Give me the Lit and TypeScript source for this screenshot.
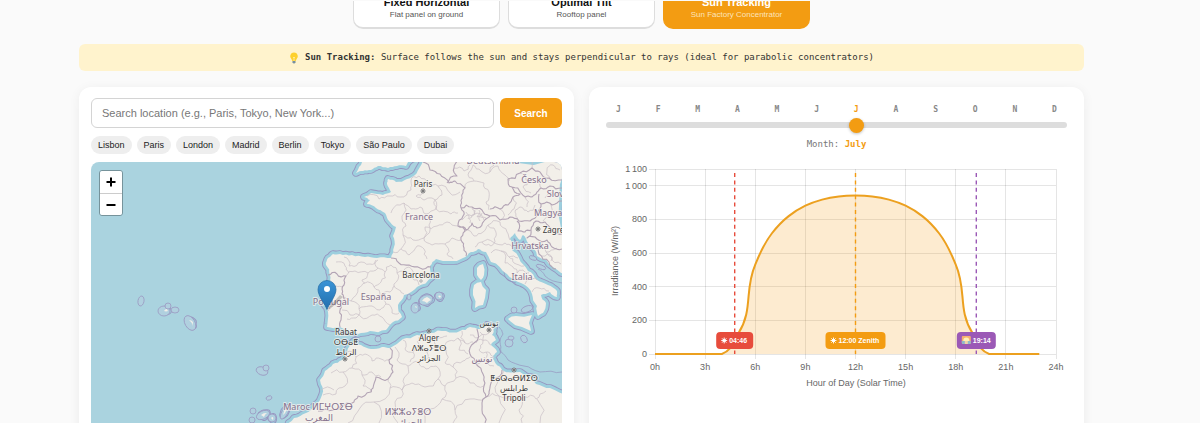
import { LitElement, html, svg, css } from "lit";
import { customElement, property, state } from "lit/decorators.js";

type Pt = [number, number];

const SANS = css`"Liberation Sans", Arial, sans-serif`;
const MONO = css`"DejaVu Sans Mono", monospace`;

/* ---------- map geometry ---------- */

const parse = (s: string): Pt[] =>
  s.trim().split(/\s+/).map((p) => p.split(",").map(Number) as Pt);

/** Subdivides a polyline and displaces the midpoints so that it reads as a natural boundary. */
function rough(s: string, amp = 0.16, depth = 2, seed = 7): string {
  let r = seed;
  const rnd = () => {
    r = (r * 16807) % 2147483647;
    return r / 2147483647 - 0.5;
  };
  let pts = parse(s);
  for (let d = 0; d < depth; d++) {
    const out: Pt[] = [pts[0]];
    for (let i = 1; i < pts.length; i++) {
      const [x0, y0] = pts[i - 1];
      const [x1, y1] = pts[i];
      const k = rnd() * 2 * amp;
      out.push([(x0 + x1) / 2 - (y1 - y0) * k, (y0 + y1) / 2 + (x1 - x0) * k], [x1, y1]);
    }
    pts = out;
  }
  return "M" + pts.map(([x, y]) => `${x.toFixed(1)} ${y.toFixed(1)}`).join("L");
}

const LAND = [
  // Europe
  "423,155 420,167 415,175 407,179 396,182 388,179 387,184 391,192 383,195 371,193 364,197 370,200 367,204 376,208 385,213 389,221 396,227 393,236 394,247 391,258 377,258 365,257 352,255 340,254 333,254 328,258 326,265 330,275 329,285 326,293 324,304 328,312 327,327 340,327 348,331 358,334 370,331 386,330 393,322 402,317 398,305 404,295 417,287 432,277 430,266 436,259 450,261 463,258 471,252 478,249 486,252 491,262 507,274 521,283 532,294 537,306 538,316 543,313 546,303 541,295 550,292 557,297 557,291 548,285 537,280 528,271 519,258 512,250 510,239 515,233 520,240 523,235 528,243 537,256 553,267 570,276 570,155",
  // Great Britain
  "361,155 361,165 356,173 363,171 371,170 378,166 388,168 397,166 406,166 418,155",
  // Africa
  "286,430 294,418 306,413 315,405 322,395 320,380 325,371 333,364 342,360 347,352 354,341 361,345 371,349 382,347 390,348 403,339 417,335 430,333 446,331 460,331 470,327 480,329 487,325 494,328 492,335 496,340 491,345 497,352 492,357 496,364 502,370 520,372 531,377 536,384 550,388 570,397 570,430",
  "508,319 516,316 532,315 529,323 531,331 522,327 510,321",
  "474,285 481,282 486,290 483,305 475,308 473,295",
  "477,268 483,264 484,275 481,280 477,275",
  "422,301 427,297 431,300 427,303",
  "415,307 416,306 417,308",
  "438,296 441,296 440,298",
  "164,311 167,309 168,311",
  "189,320 193,322 193,326",
  "261,415 267,413 264,417",
  "271,418 273,417 273,420",
  "283,415 287,408 286,411",
].map((s, i) => rough(s + " " + s.trim().split(" ")[0], 0.12, i < 3 ? 2 : 1, 11 + i) + "Z").join("");

const COUNTRIES = [
  // Portugal / Spain
  "328,275 337,274 346,276 344,285 342,294 345,300 340,310 341,320 340,327",
  // Pyrenees
  "391,258 399,263 409,265 420,268 431,267",
  // France north and east
  "423,162 430,170 440,174 449,183 455,181 465,188 462,198 461,208",
  "447,183 457,176 454,168 459,160",
  "461,208 463,216 458,226 465,231 461,240 464,248 466,256",
  // Switzerland
  "461,208 472,207 482,210 490,216 484,221 477,228 472,223 466,230 459,226",
  // Germany, Austria, Czechia
  "490,209 500,209 508,205 513,197 520,194 512,187 508,179 520,173 532,168 540,172 549,178 562,180",
  "512,187 521,193 531,197 536,194 541,188 550,186 562,188",
  "490,216 500,220 510,217 519,221 530,221 537,213 541,204 539,194",
  "517,221 518,231 525,232 531,230 536,221 545,222 554,231 562,234",
  "531,230 527,238 537,239 547,240 552,247 562,249",
  "533,243 539,254 549,262 556,269",
  "541,204 552,205 562,201",
  // North Africa
  "390,348 389,360 393,372 388,379 376,377 373,388 371,392 358,396 354,402 341,405 333,410 318,411",
  "477,329 474,343 470,354 476,364 483,374 484,386 486,397 482,410 485,423",
  "502,370 493,379 489,392 486,397",
];

const REGIONS = [
  "411,181 419,176 427,185 438,186 442,195 435,200 436,209 451,214 458,213",
  "423,191 416,196 424,200 432,198 436,209 426,214 420,207 411,209 404,203 400,205 391,213",
  "367,196 379,199 390,196 400,197 411,190 411,181",
  "404,203 402,216 406,226 403,235 413,240 424,238 425,227 437,226 447,222 458,226",
  "426,214 429,225 424,238 432,245 445,244 452,238 461,240",
  "403,235 401,249 409,255 417,246 424,249 427,259",
  "445,244 447,254 453,259", "401,249 393,252",
  "438,186 450,193 460,192", "423,191 430,184",
  "465,188 474,181 484,183 489,192 486,202 489,210",
  "474,181 469,172 473,165 481,171 490,172 498,166 505,175 509,181",
  "454,168 464,171 470,165 468,158", "490,172 494,165 491,158",
  "520,173 526,180 537,181 541,188", "532,168 536,160", "528,180 523,187 531,193",
  "550,178 547,170 553,165 560,170", "535,205 528,212 521,207 515,212 517,220",
  "551,205 549,215 543,221", "545,198 555,194 562,196", "552,214 562,216",
  "500,209 503,218", "513,197 514,209 508,215", "525,197 527,207",
  "462,220 472,216 474,211", "470,223 472,215 480,214 484,220", "479,210 477,217 486,218",
  "466,212 468,219", "472,208 475,215", "480,221 482,213",
  // Italy
  "465,231 474,236 483,232 488,225 494,228 496,236 491,246 482,242 475,247",
  "488,225 500,222 507,232 510,240", "482,242 493,242 505,243 512,247",
  "491,253 501,251 509,257 518,258", "501,251 505,263 513,267 517,273",
  "509,257 514,263 524,266", "517,273 523,270 529,273", "525,284 531,279 537,280", "532,292 539,288 549,291",
  "535,247 546,252 557,248", "546,252 551,261", "542,256 552,257 561,264", "538,243 545,247",
  // Iberia
  "346,276 355,271 368,273 378,268 385,272 391,265", "336,262 345,266 349,273", "344,257 349,266 358,263 370,264 378,260",
  "378,268 376,260", "385,272 381,282 374,287 365,283 358,288 351,301 344,297",
  "391,265 397,273 409,267", "397,273 394,284 399,290 404,294", "374,287 380,296 390,292 395,286",
  "351,301 359,309 369,306 380,310 386,304 382,296", "359,309 356,318 347,319", "386,304 392,313 399,313",
  "342,310 350,315 361,317 372,315 382,317 390,325", "330,292 336,286 343,288", "328,311 335,305 341,308",
  "368,273 362,280 365,283", "409,267 412,278 419,285",
  // Maghreb
  "347,352 356,357 365,354 372,361 381,359 389,360", "356,357 352,368 343,372 331,373", "352,368 362,375 372,372 381,377",
  "343,372 345,386 336,394 323,395", "362,375 363,386 371,392", "321,390 334,390",
  "395,347 397,360 408,366 419,362 426,369 436,366", "403,340 405,349 413,352 420,346 427,352 436,347 446,351",
  "413,352 410,362", "427,352 425,362", "436,347 437,338 447,336", "446,351 449,341 458,338 465,343 473,342",
  "458,338 459,350 468,354", "446,351 445,363 453,367 463,361 470,357", "420,346 419,337", "465,343 462,331",
  "436,366 438,379 425,387 412,383 402,390 390,388 388,379", "408,366 404,378 402,390", "453,367 456,378 445,386 438,379",
  "456,378 470,383 484,386", "402,390 395,402 398,423", "445,386 442,399 430,409 425,423", "442,399 455,410 470,399 486,397",
  "455,410 453,423", "390,388 374,402 360,408 348,423", "374,402 379,423",
  "476,343 486,340 491,345", "480,332 483,341 479,350 488,352 494,358", "477,364 487,363 494,366",
  "486,352 483,361", "470,335 476,338 489,333", "486,397 499,396 512,400 524,397", "499,396 499,379 504,371",
  "520,398 519,410 522,423", "524,397 536,399 546,391", "537,399 540,423", "499,396 499,423",
].map((s, i) => rough(s, 0.24, 2, 31 + i * 17)).join("");

const COUNTRY_PATH = COUNTRIES.map((s, i) => rough(s, 0.22, 2, 91 + i * 13)).join("");

const MARITIME = [
  "499,327 503,334 500,342 501,352 508,360 524,366 540,372 562,372",
  "497,262 505,277 516,283", "538,269 545,276 562,283", "523,233 529,240 533,248",
].map((s) => rough(s, 0.1, 2)).join("");

const RINGS: [number, number, number, number, number][] = [
  [141, 301, 3, 5, 10], [164, 311, 6, 5, 0], [168, 306, 3, 3, 0], [175, 310, 4, 3, 0],
  [190, 323, 5, 8, -30], [262, 371, 6, 4, 20], [266, 368, 3, 3, 0], [269, 398, 3, 2, -20],
  [253, 411, 3, 3, 0], [252, 420, 3, 3, 0], [263, 415, 7, 4, -25], [272, 418, 4, 4, 0], [285, 412, 3, 8, 30],
  [415, 308, 4, 5, 0], [426, 300, 7, 5, -20], [439, 296, 4, 4, 0], [409, 297, 2, 3, 0],
  [378, 339, 3, 3, 0], [514, 310, 3, 3, 0], [527, 309, 6, 3, -20], [509, 343, 4, 4, 0],
  [524, 339, 3, 4, -30], [511, 338, 3, 2, 0], [533, 258, 4, 2, 20], [541, 267, 5, 2, 20],
];

type Label = [string, number, number, boolean];
const LABELS: Label[] = [
  ["Deutschland", 493, 164, false], ["Česko", 534, 183, false], ["Slovensko", 568, 197, false],
  ["Magyarország", 564, 216, false], ["France", 419, 220, false], ["Hrvatska", 530, 249, false],
  ["Italia", 522, 280, false], ["España", 376, 300, false], ["Portugal", 331, 305, false],
  ["تونس", 482, 362, false], ["Maroc ⵍⵎⵖⵔⵉⴱ", 318, 410, false], ["المغرب", 319, 421, false],
  ["ⵍⵣⵣⴰⵢⴻⵔ", 408, 415, false], ["الجزائر", 409, 426, false],
  ["Paris", 423, 187, true], ["Zagreb", 556, 233, true], ["Barcelona", 421, 278, true],
  ["Rabat", 346, 335, true], ["ⵔⴱⴰⵟ", 346, 345, true], ["الرباط", 346, 355, true],
  ["Alger", 429, 341, true], ["ⴷⵣⴰⵢⴻⵔ", 429, 351, true], ["الجزائر", 429, 361, true],
  ["تونس", 489, 326, true], ["ⵟⴰⵕⴰⴱⵍⵉⵙ", 514, 381, true], ["طرابلس", 514, 391, true], ["Tripoli", 514, 401, true],
];

const CAPITALS: Pt[] = [[423, 191], [538, 229], [345, 359], [429, 331], [489, 330], [514, 370]];

@customElement("location-map")
class LocationMap extends LitElement {
  static styles = css`
    :host { display: block; position: relative; height: 400px; border-radius: 8px; overflow: hidden; background: #aad3df; }
    .map { display: block; width: 100%; height: 100%; }
    .label { font: 9px "Noto Sans", "DejaVu Sans", sans-serif; text-anchor: middle; paint-order: stroke; stroke: #f7f4ef; stroke-width: 2px; stroke-opacity: 0.7; stroke-linejoin: round; fill: #84708c; }
    .city { fill: #3a3a3a; font-size: 8px; }
    .zoom { position: absolute; top: 8px; left: 8px; display: flex; flex-direction: column; border: 1px solid rgba(0, 0, 0, 0.3); border-radius: 3px; background-clip: padding-box; overflow: hidden; }
    .zoom button { width: 22px; height: 22px; padding: 0; border: 0; background: #fff; display: grid; place-items: center; cursor: pointer; }
    .zoom button + button { border-top: 1px solid #ccc; }
  `;
  render() {
    return html`
      <svg class="map" viewBox="91 162 471 400" preserveAspectRatio="xMidYMin slice" role="img" aria-label="Map">
        <defs>
          <linearGradient id="pin" x2="0" y2="1"><stop stop-color="#3b94d6" /><stop offset="1" stop-color="#216fae" /></linearGradient>
        </defs>
        <g fill="none" stroke-linejoin="round">
          <path d=${LAND} stroke="#9795c0" stroke-width="7.6" />
          <path d=${LAND} stroke="#9dcfde" stroke-width="5.8" />
          <g fill="#b0d0df" stroke="#9a98c1" stroke-width="0.8">
            ${RINGS.map(([x, y, rx, ry, a]) => svg`<ellipse cx=${x} cy=${y} rx=${rx} ry=${ry} transform=${`rotate(${a} ${x} ${y})`} />`)}
          </g>
          <path d=${MARITIME} stroke="#9795c0" stroke-width="0.7" />
          <path d=${LAND} fill="#f2efe9" />
          <path d=${REGIONS} stroke="#c9bec6" stroke-width="0.7" />
          <path d=${COUNTRY_PATH} stroke="#b3a4b5" stroke-width="1.1" />
        </g>
        ${CAPITALS.map(([x, y]) => svg`<circle cx=${x} cy=${y} r="2" fill="#eee" stroke="#555" stroke-width="0.7" /><circle cx=${x} cy=${y} r="1" fill="#555" />`)}
        <circle cx="421" cy="281" r="1.2" fill="#fff" stroke="#777" stroke-width="0.6" />
        ${LABELS.map(([t, x, y, city]) => svg`<text class=${city ? "label city" : "label"} x=${x} y=${y}>${t}</text>`)}
        <path d="M327 309L340 295L343 297L330 309Z" fill="#000" opacity="0.18" />
        <path d="M327 309.5C325 304 318 296 318 289.5A9 9 0 0 1 336 289.5C336 296 329 304 327 309.5Z" fill="url(#pin)" stroke="#2068a3" stroke-width="0.7" />
        <circle cx="327" cy="289" r="3" fill="#fff" />
      </svg>
      <div class="zoom">
        <button aria-label="Zoom in"><svg width="10" height="10"><path d="M5 .5v9M.5 5h9" stroke="#000" stroke-width="2" /></svg></button>
        <button aria-label="Zoom out"><svg width="10" height="10"><path d="M.5 5h9" stroke="#000" stroke-width="2" /></svg></button>
      </div>
    `;
  }
}

/* ---------- irradiance chart ---------- */

const HOURLY = [0, 0, 0, 0, 0, 124, 532, 718, 820, 882, 918, 937, 942, 937, 918, 882, 820, 718, 532, 124, 0, 0, 0, 0];
const PLOT = { left: 54, right: 455, top: 19, bottom: 204, max: 1100 };
const px = (h: number) => PLOT.left + ((PLOT.right - PLOT.left) * h) / 24;
const py = (v: number) => PLOT.bottom - ((PLOT.bottom - PLOT.top) * v) / PLOT.max;

function spline(values: number[], tension = 0.4): string {
  const pts: Pt[] = values.map((v, h) => [px(h), py(v)]);
  const clamp = (y: number) => Math.min(PLOT.bottom, Math.max(PLOT.top, y));
  const ctrl = pts.map((c, i) => {
    const p = pts[Math.max(0, i - 1)];
    const n = pts[Math.min(pts.length - 1, i + 1)];
    const a = Math.hypot(c[0] - p[0], c[1] - p[1]);
    const b = Math.hypot(n[0] - c[0], n[1] - c[1]);
    const t = tension;
    // tangent weighted towards the nearer neighbour keeps uneven steps round
    const sx = ((c[0] - p[0]) * b) / (a || 1) + ((n[0] - c[0]) * a) / (b || 1);
    const sy = ((c[1] - p[1]) * b) / (a || 1) + ((n[1] - c[1]) * a) / (b || 1);
    const len = Math.hypot(sx, sy) || 1;
    return {
      before: [c[0] - (sx / len) * a * t, clamp(c[1] - (sy / len) * a * t)],
      after: [c[0] + (sx / len) * b * t, clamp(c[1] + (sy / len) * b * t)],
    };
  });
  let d = `M${pts[0]}`;
  for (let i = 1; i < pts.length; i++) d += `C${ctrl[i - 1].after} ${ctrl[i].before} ${pts[i]}`;
  return d;
}

const sunGlyph = (x: number, y: number) => svg`
  <g stroke="#fff" stroke-width="0.9" stroke-linecap="round">
    <path d=${`M${x - 2.6} ${y}h5.2M${x} ${y - 2.6}v5.2M${x - 1.9} ${y - 1.9}l3.8 3.8M${x + 1.9} ${y - 1.9}l-3.8 3.8`} />
    <circle cx=${x} cy=${y} r="1.3" fill="#fff" />
  </g>`;

const sunsetGlyph = (x: number, y: number) => svg`
  <rect x=${x - 4} y=${y - 4} width="9" height="8" rx="1" fill="#f6b06f" />
  <circle cx=${x + 0.5} cy=${y + 0.5} r="3" fill="#fff0b8" />
  <path d=${`M${x - 4} ${y + 1}h9v2a1 1 0 0 1 -1 1h-7a1 1 0 0 1 -1 -1z`} fill="#8fb9c9" />
  <rect x=${x - 1} y=${y + 1} width="3" height="3" fill="#f3d3a8" />`;

@customElement("irradiance-chart")
class IrradianceChart extends LitElement {
  static styles = css`
    :host { display: block; }
    .chart { display: block; width: 100%; }
    text { font: 9px ${SANS}; fill: #666; }
    .end { text-anchor: end; }
    .mid { text-anchor: middle; }
    .flag { font-weight: bold; font-size: 7px; fill: #fff; }
  `;
  render() {
    const line = spline(HOURLY);
    const ticks = [0, 200, 400, 600, 800, 1000, 1100];
    const hours = [0, 3, 6, 9, 12, 15, 18, 21, 24];
    const marks = [
      { h: 4.77, color: "#e74c3c", w: 37, label: "04:46", set: false },
      { h: 12, color: "#f39c12", w: 60, label: "12:00 Zenith", set: false },
      { h: 19.23, color: "#9b59b6", w: 39, label: "19:14", set: true },
    ];
    return html`
      <svg class="chart" viewBox="0 0 471 250" role="img" aria-label="Irradiance by hour">
        <g stroke="#000" stroke-opacity="0.1" shape-rendering="crispEdges">
          ${ticks.map((v) => svg`<line x1=${PLOT.left - 6} x2=${PLOT.right} y1=${py(v)} y2=${py(v)} />`)}
          ${hours.map((h) => svg`<line x1=${px(h)} x2=${px(h)} y1=${PLOT.top} y2=${PLOT.bottom + 5} />`)}
        </g>
        ${ticks.map((v) => svg`<text class="end" x=${PLOT.left - 8} y=${py(v) + 3}>${v >= 1000 ? `1\u2009${String(v).slice(1)}` : v}</text>`)}
        ${hours.map((h) => svg`<text class="mid" x=${px(h)} y="220">${h}h</text>`)}
        <text class="mid" x="255" y="236">Hour of Day (Solar Time)</text>
        <text class="mid" transform="translate(17 111) rotate(-90)">Irradiance (W/m²)</text>
        <path d=${`${line}L${px(23)} ${PLOT.bottom}L${px(0)} ${PLOT.bottom}Z`} fill="#f39c12" fill-opacity="0.2" />
        <path d=${line} fill="none" stroke="#eca01f" stroke-width="2" stroke-linejoin="round" />
        ${marks.map((m) => {
          const x = px(m.h);
          const left = x - m.w / 2;
          return svg`
            <line x1=${x} x2=${x} y1=${PLOT.top + 4} y2=${PLOT.bottom} stroke=${m.color} stroke-width="1.4" stroke-dasharray="4 3.4" />
            <rect x=${left} y="182" width=${m.w} height="17" rx="4" fill=${m.color} />
            ${m.set ? sunsetGlyph(left + 9, 190) : sunGlyph(left + 8, 190.5)}
            <text class="flag" x=${left + (m.set ? 16 : 13)} y="193">${m.label}</text>`;
        })}
      </svg>
    `;
  }
}

/* ---------- month slider ---------- */

const MONTHS = ["January", "February", "March", "April", "May", "June", "July", "August", "September", "October", "November", "December"];

@customElement("month-slider")
class MonthSlider extends LitElement {
  @state() month = 7;
  static styles = css`
    :host { display: block; padding: 6px 5px 0; font-family: ${MONO}; color: #777; }
    .letters { display: flex; justify-content: space-between; padding: 0 10px; font-size: 8px; line-height: 12px; font-weight: bold; color: #888; }
    .on, b { color: #f39c12; }
    .range { display: block; appearance: none; width: 100%; height: 6px; margin: 6px 0 0; border-radius: 3px; background: #ddd; outline: none; }
    .range::-webkit-slider-thumb { appearance: none; width: 15px; height: 15px; border-radius: 50%; background: #f39c12; box-shadow: 0 1px 3px rgba(0, 0, 0, 0.25); cursor: pointer; }
    .name { display: block; margin-top: 10px; text-align: center; font-size: 9px; line-height: 12px; }
  `;
  render() {
    return html`
      <div class="letters">${MONTHS.map((m, i) => html`<span class=${i + 1 === this.month ? "on" : ""}>${m[0]}</span>`)}</div>
      <input id="month" class="range" type="range" min="1" max="12" .value=${String(this.month)}
        @input=${(e: Event) => (this.month = Number((e.target as HTMLInputElement).value))} />
      <label class="name" for="month">Month: <b>${MONTHS[this.month - 1]}</b></label>
    `;
  }
}

/* ---------- page ---------- */

const MODES = [
  ["Fixed Horizontal", "Flat panel on ground"],
  ["Optimal Tilt", "Rooftop panel"],
  ["Sun Tracking", "Sun Factory Concentrator"],
];
const CITIES = ["Lisbon", "Paris", "London", "Madrid", "Berlin", "Tokyo", "São Paulo", "Dubai"];

@customElement("app-root")
class AppRoot extends LitElement {
  @property({ type: Number }) mode = 2;
  static styles = css`
    * { box-sizing: border-box; }
    :host { box-sizing: border-box; display: block; height: 100vh; overflow: hidden; padding: 1px 116px 0 79px; background: #fafafa; font-family: ${SANS}; }
    button, input { font-family: inherit; }
    .modes { display: flex; justify-content: center; align-items: flex-end; gap: 8px; height: 28px; overflow: hidden; }
    .mode { flex: 0 0 147px; height: 62px; padding: 0 0 7px; display: flex; flex-direction: column; justify-content: flex-end; align-items: center; background: #fff; border: 1px solid #ddd; border-bottom-width: 2px; border-radius: 10px; color: #555; font-size: 8px; line-height: 10px; cursor: pointer; }
    .mode strong { font-size: 11px; line-height: 16px; color: #111; }
    .mode.on { background: #f39c12; border-color: #f39c12; color: #fce3bb; }
    .mode.on strong { color: #fff; }
    .hint { margin: 15px 0 0; padding: 7px 12px; display: flex; justify-content: center; align-items: center; gap: 6px; background: #fff3cd; border-radius: 6px; font-family: ${MONO}; font-size: 9px; line-height: 13px; color: #333; }
    .columns { display: grid; grid-template-columns: 1fr 1fr; gap: 15px; margin-top: 16px; }
    .card { min-width: 0; padding: 11px 12px 12px; background: #fff; border-radius: 12px; box-shadow: 0 2px 12px rgba(0, 0, 0, 0.06); }
    .search { display: flex; gap: 6px; }
    .field { flex: 1; min-width: 0; height: 30px; padding: 0 10px; border: 1px solid #d4d4d4; border-radius: 6px; font-size: 11px; outline: none; }
    .field::placeholder { color: #777; }
    .go { width: 62px; height: 30px; border: 0; border-radius: 6px; background: #f39c12; color: #fff; font-size: 10px; font-weight: bold; cursor: pointer; }
    .chips { display: flex; flex-wrap: wrap; gap: 5px; margin: 8px 0; }
    .chip { height: 18px; padding: 0 7px; border: 0; border-radius: 9px; background: #eee; color: #222; font-size: 9px; cursor: pointer; }
  `;
  render() {
    return html`
      <div class="modes">
        ${MODES.map(([title, note], i) => html`<button class=${i === this.mode ? "mode on" : "mode"} @click=${() => (this.mode = i)}><strong>${title}</strong>${note}</button>`)}
      </div>
      <p class="hint">
        <svg width="10" height="12" viewBox="0 0 10 12" aria-hidden="true">
          <path d="M5 .5A3.8 3.8 0 0 0 2.5 7.2L3.3 9H6.7L7.5 7.2A3.8 3.8 0 0 0 5 .5Z" fill="#fdd02d" />
          <path d="M4 5l1 1 1-1M5 6v3" stroke="#fff3c0" stroke-width=".7" fill="none" />
          <path d="M3.5 9h3v1.5L5.5 11.5h-1L3.5 10.5Z" fill="#78909c" />
        </svg>
        <span><b>Sun Tracking:</b> Surface follows the sun and stays perpendicular to rays (ideal for parabolic concentrators)</span>
      </p>
      <main class="columns">
        <section class="card">
          <div class="search">
            <input class="field" type="text" aria-label="Search location" placeholder="Search location (e.g., Paris, Tokyo, New York...)" />
            <button class="go">Search</button>
          </div>
          <div class="chips">${CITIES.map((c) => html`<button class="chip">${c}</button>`)}</div>
          <location-map></location-map>
        </section>
        <section class="card">
          <month-slider></month-slider>
          <irradiance-chart></irradiance-chart>
        </section>
      </main>
    `;
  }
}
